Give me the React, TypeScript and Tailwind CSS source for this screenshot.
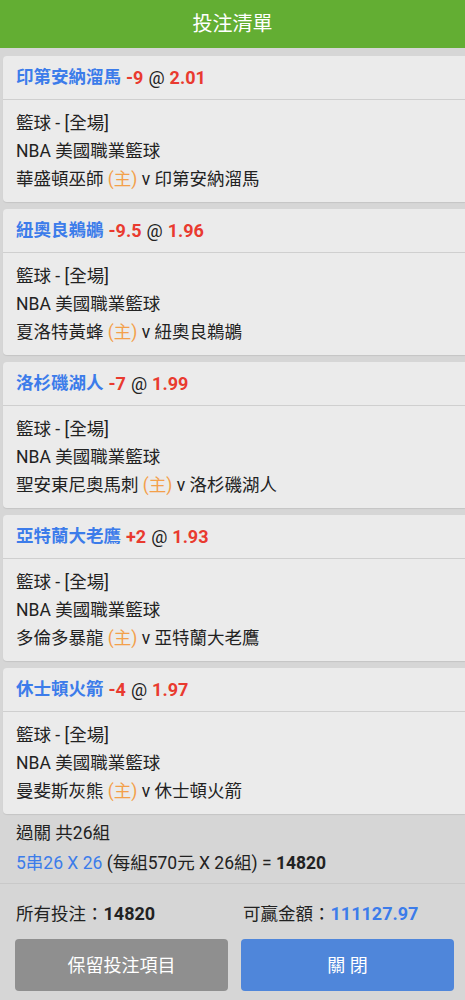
import React from "react";

const bets = [
  { team: "印第安納溜馬", hc: "-9", odds: "2.01", home: "華盛頓巫師", away: "印第安納溜馬" },
  { team: "紐奧良鵜鶘", hc: "-9.5", odds: "1.96", home: "夏洛特黃蜂", away: "紐奧良鵜鶘" },
  { team: "洛杉磯湖人", hc: "-7", odds: "1.99", home: "聖安東尼奧馬刺", away: "洛杉磯湖人" },
  { team: "亞特蘭大老鷹", hc: "+2", odds: "1.93", home: "多倫多暴龍", away: "亞特蘭大老鷹" },
  { team: "休士頓火箭", hc: "-4", odds: "1.97", home: "曼斐斯灰熊", away: "休士頓火箭" },
];

export default function App() {
  return (
    <div
      className="w-[465px] h-[1000px] bg-[#d6d6d6] overflow-hidden text-[#222]"
      style={{ fontFamily: 'Roboto, "Noto Sans CJK TC", sans-serif' }}
    >
      <div className="h-12 bg-[#63ae33] flex items-center justify-center text-white text-[20px]">
        投注清單
      </div>
      <div className="pt-2 flex flex-col gap-[7px]">
        {bets.map((b, i) => (
          <div
            key={i}
            className="ml-[3px] bg-[#ebebeb] rounded-l-[4px] shadow-[0_1px_1px_rgba(0,0,0,0.08)]"
          >
            <div className="h-[44px] flex items-center px-[13px] border-b border-[#cfcfcf] text-[17.5px] font-bold">
              <span className="text-[#3c7cea]">{b.team}</span>
              <span className="text-[#e93a2f] ml-[5px] text-[18px]">{b.hc}</span>
              <span className="text-[#222] font-normal ml-[5px] text-[18px]">@</span>
              <span className="text-[#e93a2f] ml-[5px] text-[18px]">{b.odds}</span>
            </div>
            <div className="px-[13px] py-[9px] text-[17.5px] leading-[28px]">
              <div>籃球 - [全場]</div>
              <div>NBA 美國職業籃球</div>
              <div>
                {b.home} <span className="text-[#f3a04a]">(主)</span> v {b.away}
              </div>
            </div>
          </div>
        ))}
      </div>
      <div className="px-4 pt-[4px] pb-[5px] text-[17.5px] leading-[30px] border-b border-[#c9c9c9]">
        <div>過關 共26組</div>
        <div>
          <span className="text-[#3c7cea]">5串26 X 26</span> (每組570元 X 26組) ={" "}
          <span className="font-bold">14820</span>
        </div>
      </div>
      <div className="flex px-4 pt-4 text-[17.5px] leading-[28px]">
        <div className="w-[227px]">
          所有投注：<span className="font-bold text-[18px]">14820</span>
        </div>
        <div>
          可贏金額：<span className="font-bold text-[18px] text-[#3c7cea]">111127.97</span>
        </div>
      </div>
      <div className="flex pl-[15px] pr-[11px] gap-[13px] mt-[11px]">
        <button className="flex-1 h-[52px] rounded-[4px] bg-[#8f8f8f] text-white text-[18px]">
          保留投注項目
        </button>
        <button className="flex-1 h-[52px] rounded-[4px] bg-[#4f86da] text-white text-[18px]">
          關 閉
        </button>
      </div>
    </div>
  );
}
